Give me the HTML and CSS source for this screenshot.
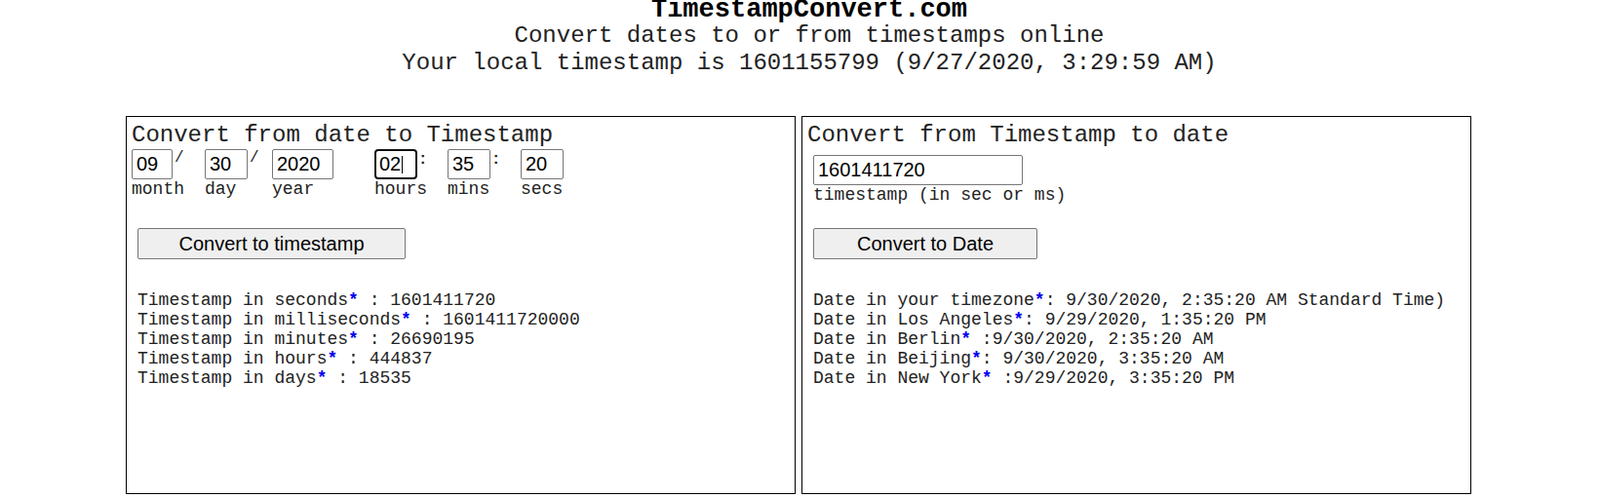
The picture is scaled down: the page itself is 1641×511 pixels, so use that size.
FILE: index.html
```html
<!DOCTYPE html>
<html>
<head>
<meta charset="utf-8">
<title>TimestampConvert.com</title>
<link rel="stylesheet" href="styles.css">
</head>
<body>
<header class="site-header">
  <div class="site-title">TimestampConvert.com</div>
  <div class="site-sub">Convert dates to or from timestamps online</div>
  <div class="site-sub">Your local timestamp is 1601155799 (9/27/2020, 3:29:59 AM)</div>
</header>
<main class="panels">
  <section class="panel">
    <div class="panel-title">Convert from date to Timestamp</div>
    <div class="fields">
      <div class="field">
        <div class="field-row"><input class="num w-month" value="09"><span class="sep">/</span></div>
        <span class="field-label">month</span>
      </div>
      <div class="field">
        <div class="field-row"><input class="num w-2" value="30"><span class="sep">/</span></div>
        <span class="field-label">day</span>
      </div>
      <div class="field">
        <div class="field-row"><input class="num w-year" value="2020"></div>
        <span class="field-label">year</span>
      </div>
      <div class="field">
        <div class="field-row"><div class="num w-2 focused">02<span class="caret"></span></div><span class="sep colon">:</span></div>
        <span class="field-label">hours</span>
      </div>
      <div class="field">
        <div class="field-row"><input class="num w-2" value="35"><span class="sep colon">:</span></div>
        <span class="field-label">mins</span>
      </div>
      <div class="field">
        <div class="field-row"><input class="num w-2" value="20"></div>
        <span class="field-label">secs</span>
      </div>
    </div>
    <div class="panel-body">
      <button class="btn btn-ts">Convert to timestamp</button>
      <div class="results">
        <div>Timestamp in seconds<b class="star">*</b> : 1601411720</div>
        <div>Timestamp in milliseconds<b class="star">*</b> : 1601411720000</div>
        <div>Timestamp in minutes<b class="star">*</b> : 26690195</div>
        <div>Timestamp in hours<b class="star">*</b> : 444837</div>
        <div>Timestamp in days<b class="star">*</b> : 18535</div>
      </div>
    </div>
  </section>
  <section class="panel">
    <div class="panel-title">Convert from Timestamp to date</div>
    <div class="panel-body">
      <input class="num w-ts" value="1601411720">
      <div class="ts-label">timestamp (in sec or ms)</div>
      <button class="btn btn-date">Convert to Date</button>
      <div class="results">
        <div>Date in your timezone<b class="star">*</b>: 9/30/2020, 2:35:20 AM Standard Time)</div>
        <div>Date in Los Angeles<b class="star">*</b>: 9/29/2020, 1:35:20 PM</div>
        <div>Date in Berlin<b class="star">*</b> :9/30/2020, 2:35:20 AM</div>
        <div>Date in Beijing<b class="star">*</b>: 9/30/2020, 3:35:20 AM</div>
        <div>Date in New York<b class="star">*</b> :9/29/2020, 3:35:20 PM</div>
      </div>
    </div>
  </section>
</main>
</body>
</html>
```
FILE: styles.css
```css
* { box-sizing: border-box; }
html, body { margin: 0; padding: 0; background: #fff; overflow: hidden; }
body {
  font-family: "Liberation Mono", "Courier New", monospace;
  color: #222;
}
.site-header {
  margin-top: -2px;
  padding-left: 19px;
  text-align: center;
}
.site-title {
  font-size: 27px;
  line-height: 25px;
  font-weight: bold;
  color: #000;
}
.site-sub {
  font-size: 24px;
  line-height: 28px;
  color: #222;
}
.panels {
  display: flex;
  gap: 6px;
  margin-top: 40px;
  padding-left: 129px;
}
.panel {
  width: 687px;
  height: 388px;
  border: 1px solid #000;
  padding: 5px;
}
.panel-title {
  font-size: 24px;
  line-height: 27px;
  color: #222;
}
.fields {
  display: grid;
  grid-template-columns: 75px 69px 105px 75px 75px 60px;
  margin-top: 1px;
}
.field { display: flex; flex-direction: column; }
.field-row { display: flex; align-items: flex-start; }
.field-label {
  font-size: 18px;
  line-height: 20px;
  color: #222;
}
.num {
  height: 31px;
  border: 1px solid #767676;
  border-radius: 2px;
  padding: 0 4px;
  font-family: "Liberation Sans", Arial, sans-serif;
  font-size: 20px;
  color: #000;
  background: #fff;
  margin: 0;
  outline: none;
}
.w-month { width: 42px; }
.w-2 { width: 44px; }
.w-year { width: 63px; }
.w-ts { width: 215px; margin-top: 7px; }
.focused {
  display: flex;
  align-items: center;
  border: 2px solid #101010;
  border-radius: 4px;
  padding: 0 3px;
}
.caret {
  display: inline-block;
  width: 1px;
  height: 18px;
  background: #000;
  margin-left: 1px;
}
.sep {
  font-size: 16px;
  line-height: 16px;
  margin-left: 2px;
  margin-top: 1px;
  color: #222;
}
.colon {
  font-family: "Liberation Sans", Arial, sans-serif;
  font-weight: bold;
  margin-left: 3px;
  margin-top: 2px;
}
.panel-body { padding-left: 6px; }
.ts-label {
  font-size: 18px;
  line-height: 21px;
  color: #222;
}
.btn {
  display: block;
  height: 32px;
  border: 1px solid #767676;
  border-radius: 2px;
  background: #efefef;
  font-family: "Liberation Sans", Arial, sans-serif;
  font-size: 20px;
  color: #000;
  padding: 0;
}
.btn-ts { width: 275px; margin-top: 30px; }
.btn-date { width: 230px; margin-top: 23px; }
.results {
  margin-top: 32px;
  font-size: 18px;
  line-height: 20px;
  color: #222;
  white-space: nowrap;
}
.star { color: #0000ee; font-weight: bold; }
```
